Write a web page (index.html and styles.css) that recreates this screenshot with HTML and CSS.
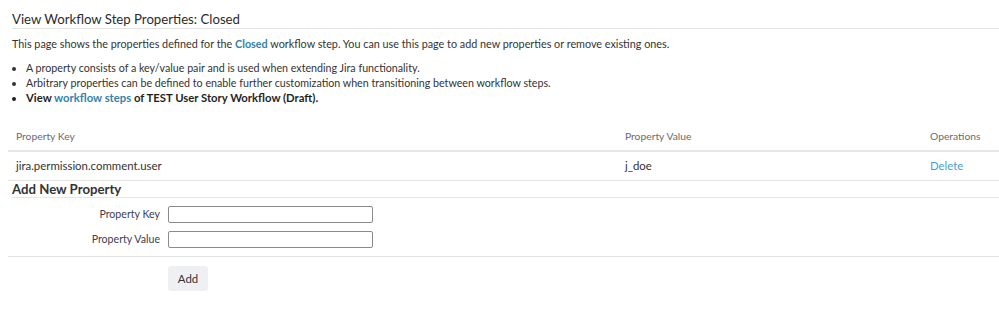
FILE: index.html
```html
<!DOCTYPE html>
<html>
<head>
<meta charset="utf-8">
<link rel="stylesheet" href="styles.css">
</head>
<body>
<div class="page">
  <h2 class="title">View Workflow Step Properties: Closed</h2>
  <p class="intro">This page shows the properties defined for the <a class="link strong" href="#">Closed</a> workflow step. You can use this page to add new properties or remove existing ones.</p>
  <ul class="notes">
    <li>A property consists of a key/value pair and is used when extending Jira functionality.</li>
    <li>Arbitrary properties can be defined to enable further customization when transitioning between workflow steps.</li>
    <li class="bold">View <a class="link" href="#">workflow steps</a> of TEST User Story Workflow (Draft).</li>
  </ul>
  <table class="props">
    <colgroup>
      <col class="c-key">
      <col class="c-val">
      <col class="c-ops">
    </colgroup>
    <thead>
      <tr><th>Property Key</th><th>Property Value</th><th>Operations</th></tr>
    </thead>
    <tbody>
      <tr><td>jira.permission.comment.user</td><td>j_doe</td><td><a class="link plain" href="#">Delete</a></td></tr>
    </tbody>
  </table>
  <h3 class="add-title">Add New Property</h3>
  <form class="add-form">
    <div class="fields">
      <label class="lbl" for="k">Property Key</label>
      <input class="inp" id="k" type="text">
      <label class="lbl" for="v">Property Value</label>
      <input class="inp" id="v" type="text">
    </div>
  </form>
  <div class="actions">
    <button class="btn" type="button">Add</button>
  </div>
</div>
</body>
</html>
```
FILE: styles.css
```css
html, body {
  margin: 0;
  padding: 0;
  background: #fff;
}
body {
  font-family: Lato, "Open Sans", sans-serif;
  color: #333;
}
.page {
  padding-left: 8px;
}
.title {
  margin: 0 0 0 4px;
  padding-top: 10px;
  font-size: 13.2px;
  line-height: 18px;
  font-weight: 400;
  color: #2b2b2b;
  border-bottom: 1px solid #e3e3e3;
}
.intro {
  margin: 7px 0 0 4px;
  font-size: 10.8px;
  line-height: 16px;
}
.link {
  color: #3283ad;
  text-decoration: none;
}
.strong {
  font-weight: 700;
}
.notes {
  margin: 8px 0 0 4px;
  padding-left: 14px;
  font-size: 10.7px;
  line-height: 15px;
}
.bold {
  font-weight: 700;
  font-size: 11.3px;
  color: #1f1f1f;
}
.props {
  width: 100%;
  margin-top: 15px;
  border-collapse: collapse;
  table-layout: fixed;
}
.c-key { width: 609px; }
.c-val { width: 305px; }
.props th {
  text-align: left;
  font-size: 10.3px;
  font-weight: 400;
  color: #6b6b6b;
  line-height: 14px;
  padding: 9px 8px 7px;
  border-bottom: 2px solid #e6e6e6;
}
.props td {
  font-size: 11.4px;
  line-height: 16px;
  padding: 6px 8px;
  border-bottom: 1px solid #e6e6e6;
  color: #333;
}
.plain {
  color: #4a9fd0;
}
.add-title {
  margin: 0 0 0 4px;
  font-size: 13.2px;
  line-height: 16px;
  font-weight: 700;
  color: #333;
  border-bottom: 1px solid #e6e6e6;
}
.add-form {
  margin: 0;
  padding: 8px 0 8px;
  border-bottom: 1px solid #e3e3e3;
}
.fields {
  display: grid;
  grid-template-columns: 152px 205px;
  column-gap: 8px;
  row-gap: 8px;
  align-items: center;
}
.lbl {
  text-align: right;
  font-size: 10.6px;
  line-height: 17px;
  color: #40404f;
}
.inp {
  box-sizing: border-box;
  width: 205px;
  height: 17px;
  margin: 0;
  padding: 0 3px;
  border: 1px solid #8a8a8a;
  border-radius: 2px;
  background: #fff;
  font: inherit;
  font-size: 11px;
}
.actions {
  padding: 9px 0 0 160px;
}
.btn {
  width: 40px;
  height: 25px;
  margin: 0;
  padding: 0;
  border: none;
  border-radius: 3px;
  background: #eff0f3;
  color: #333;
  font-family: inherit;
  font-size: 11.4px;
}
```
